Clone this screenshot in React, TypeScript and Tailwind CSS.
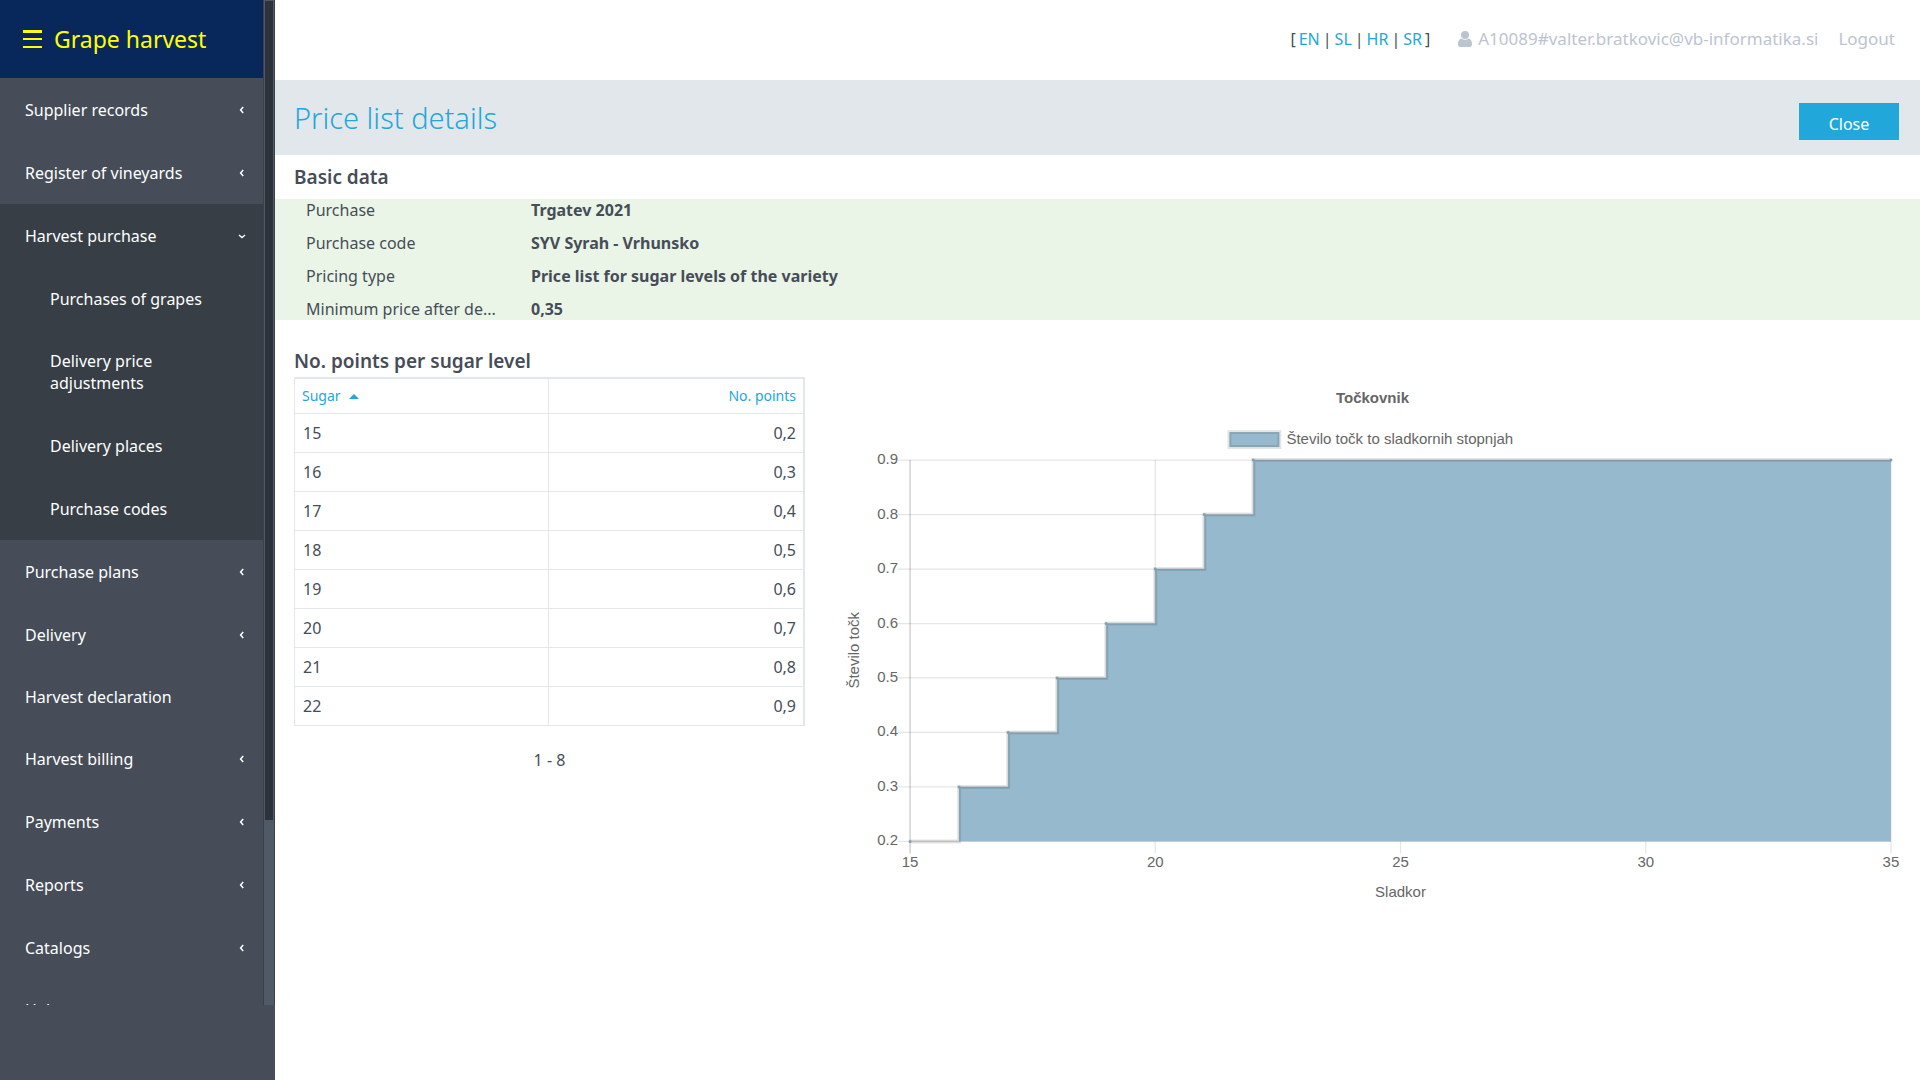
import React from "react";

type NavItem = { label: string; kind: "closed" | "open" | "leaf"; children?: string[] };

const NAV: NavItem[] = [
  { label: "Supplier records", kind: "closed" },
  { label: "Register of vineyards", kind: "closed" },
  {
    label: "Harvest purchase",
    kind: "open",
    children: ["Purchases of grapes", "Delivery price adjustments", "Delivery places", "Purchase codes"],
  },
  { label: "Purchase plans", kind: "closed" },
  { label: "Delivery", kind: "closed" },
  { label: "Harvest declaration", kind: "leaf" },
  { label: "Harvest billing", kind: "closed" },
  { label: "Payments", kind: "closed" },
  { label: "Reports", kind: "closed" },
  { label: "Catalogs", kind: "closed" },
  { label: "Help", kind: "leaf" },
];

const DETAILS: [string, string][] = [
  ["Purchase", "Trgatev 2021"],
  ["Purchase code", "SYV Syrah - Vrhunsko"],
  ["Pricing type", "Price list for sugar levels of the variety"],
  ["Minimum price after de...", "0,35"],
];

const POINTS: [number, string][] = [
  [15, "0,2"],
  [16, "0,3"],
  [17, "0,4"],
  [18, "0,5"],
  [19, "0,6"],
  [20, "0,7"],
  [21, "0,8"],
  [22, "0,9"],
];

function Chevron({ open }: { open: boolean }) {
  return (
    <svg viewBox="0 0 8 8" className="size-2 shrink-0" fill="none" stroke="currentColor" strokeWidth="1.5" aria-hidden="true">
      <path d={open ? "M1 3 L4 5.5 L7 3" : "M5.2 1 L2.6 4 L5.2 7"} />
    </svg>
  );
}

function Sidebar() {
  return (
    <aside className="w-[275px] shrink-0 bg-[#464d58] text-white">
      <div className="flex h-[calc(100vh-75px)] overflow-hidden">
        <div className="min-w-0 flex-1 border-r border-[#3a414a]">
          <div className="flex h-[78px] items-center gap-3 bg-[#08285c] pl-[23px] text-[#ffff00]">
            <svg viewBox="0 0 19 18" className="h-[18px] w-[19px]" fill="currentColor" aria-hidden="true">
              <path d="M0 0h19v3H0zM0 8h19v2H0zM0 16h19v2H0z" />
            </svg>
            <span className="text-[23px] leading-8">Grape harvest</span>
          </div>
          <nav>
            <ul>
              {NAV.map((item) => (
                <li key={item.label} className={item.kind === "open" ? "bg-[#373e45]" : ""}>
                  <a
                    href="#"
                    className={`flex items-center justify-between pl-[25px] pr-[17px] text-[16px] leading-[22px] ${
                      item.kind === "leaf" ? "h-[61px]" : "h-[63px]"
                    }`}
                  >
                    {item.label}
                    {item.kind !== "leaf" && <Chevron open={item.kind === "open"} />}
                  </a>
                  {item.children && (
                    <ul>
                      {item.children.map((c) => (
                        <li key={c}>
                          <a href="#" className="flex min-h-[63px] items-center py-5 pr-12 pl-[50px] text-[16px] leading-[22px]">
                            {c}
                          </a>
                        </li>
                      ))}
                    </ul>
                  )}
                </li>
              ))}
            </ul>
          </nav>
        </div>
        <div className="w-[11px] border-r border-[#3a414a] bg-[#505966] px-px pt-px">
          <div className="h-[819px] bg-[#2c333b]" />
        </div>
      </div>
    </aside>
  );
}

const PX = 66;
const STEP_X = 49;
const yAt = (v: number) => 465 - ((v - 0.2) / 0.7) * 381;
const xAt = (s: number) => PX + (s - 15) * STEP_X;

function StepChart() {
  const levels = [0.2, 0.3, 0.4, 0.5, 0.6, 0.7, 0.8, 0.9];
  let line = `M${xAt(15)} ${yAt(0.2)}`;
  levels.slice(1).forEach((v, i) => {
    line += ` H${xAt(16 + i)} V${yAt(v)}`;
  });
  line += ` H${xAt(35)}`;
  const corners = levels.map((v, i) => [xAt(15 + i), yAt(v)]).concat([[xAt(35), yAt(0.9)]]);
  return (
    <svg viewBox="0 0 1065 540" className="block w-full font-['Liberation_Sans',Arial,sans-serif] text-[15px]" role="img" aria-label="Točkovnik">
      <g stroke="#000" strokeOpacity="0.1" strokeWidth="1.25">
        {levels.map((v) => (
          <path key={v} d={`M54 ${yAt(v)}H1046`} />
        ))}
        {[20, 25, 30, 35].map((s) => (
          <path key={s} d={`M${xAt(s)} 84V477`} />
        ))}
        <path d="M66 84V477" strokeOpacity="0.22" />
      </g>
      <path d={`${line} V465 H66 Z`} fill="#97b9cd" />
      <path d={line} fill="none" stroke="#000" strokeOpacity="0.1" strokeWidth="4" />
      <path d={line} fill="none" stroke="#000" strokeOpacity="0.06" strokeWidth="2" />
      {corners.map(([x, y]) => (
        <circle key={`${x}-${y}`} cx={x} cy={y} r="1.5" fill="#7ba3b8" />
      ))}
      <rect x="385" y="56" width="50" height="15" fill="#97b9cd" />
      <rect x="385" y="56" width="50" height="15" fill="none" stroke="#000" strokeOpacity="0.1" strokeWidth="4" />
      <g fill="#666">
        <text x="528" y="27" textAnchor="middle" fontWeight="bold">Točkovnik</text>
        <text x="442" y="68">Število točk to sladkornih stopnjah</text>
        {levels.map((v) => (
          <text key={v} x="54" y={yAt(v) + 4} textAnchor="end">{v.toFixed(1)}</text>
        ))}
        {[15, 20, 25, 30, 35].map((s) => (
          <text key={s} x={xAt(s)} y="491" textAnchor="middle">{s}</text>
        ))}
        <text x="556" y="521" textAnchor="middle">Sladkor</text>
        <text transform="translate(15 274) rotate(-90)" textAnchor="middle">Število točk</text>
      </g>
    </svg>
  );
}

export default function App() {
  return (
    <div className="flex min-h-screen bg-white font-['Noto_Sans','Open_Sans',sans-serif] text-[#464d58]">
      <Sidebar />
      <main className="min-w-0 flex-1">
        <header className="flex h-20 items-center justify-end pr-[25px] pb-[2px] leading-[22px]">
          <div className="flex gap-[3px] text-[16px] whitespace-nowrap">
            <span>[</span>
            {["EN", "SL", "HR", "SR"].map((l, i) => (
              <React.Fragment key={l}>
                {i > 0 && <span>|</span>}
                <a href="#" className="text-[#22a7db]">{l}</a>
              </React.Fragment>
            ))}
            <span>]</span>
          </div>
          <a href="#" className="ml-[28px] flex items-center gap-[6px] text-[17px] text-[#bcc4d0]">
            <svg viewBox="0 0 14 16" className="h-4 w-[14px]" fill="currentColor" aria-hidden="true">
              <circle cx="7" cy="4" r="4" />
              <path d="M3.6 7.4C1.2 7.6 0 9.800 0 12.900 0 15 1 16 2.600 16h8.800C13 16 14 15 14 12.900c0-3.100-1.200-5.300-3.600-5.500a4.900 4.900 0 0 1-6.800 0z" />
            </svg>
            A10089#valter.bratkovic@vb-informatika.si
          </a>
          <a href="#" className="ml-5 text-[17px] text-[#bcc4d0]">Logout</a>
        </header>

        <div className="flex h-[75px] items-center justify-between bg-[#e2e7eb] pr-[21px] pl-[19px]">
          <h1 className="text-[29px] leading-9 font-light text-[#22a7db]">Price list details</h1>
          <button type="button" className="mt-2 h-[37px] w-[100px] bg-[#22a7db] pt-1 text-[16px] leading-[22px] text-white">Close</button>
        </div>

        <section>
          <h2 className="flex h-11 items-center pl-[19px] text-[19px] leading-6 font-semibold">Basic data</h2>
          <dl className="flex flex-col gap-[11px] bg-[#eaf5e7] pl-[31px] text-[16px] leading-[22px]">
            {DETAILS.map(([k, v]) => (
              <div key={k} className="flex">
                <dt className="w-[225px] shrink-0">{k}</dt>
                <dd className="font-bold">{v}</dd>
              </div>
            ))}
          </dl>
        </section>

        <div className="flex items-start gap-[39px] pt-7 pr-[10px] pl-[19px]">
          <section className="w-[511px] shrink-0">
            <h2 className="h-[29px] text-[19px] leading-[26px] font-semibold">No. points per sugar level</h2>
            <table className="w-full table-fixed border-separate border-spacing-0 border-t-2 border-r-2 border-l border-[#e2e7eb]">
              <thead>
                <tr className="h-[35px] text-[14px] leading-5 text-[#22a7db]">
                  <th scope="col" className="border-r border-b border-[#e2e7eb] px-[7px] text-left font-normal">
                    <button type="button" className="flex items-center gap-2">
                      Sugar
                      <svg viewBox="0 0 10 5" className="h-[5px] w-[10px]" fill="currentColor" aria-hidden="true">
                        <path d="M0 5L5 0l5 5z" />
                      </svg>
                    </button>
                  </th>
                  <th scope="col" className="border-b border-[#e2e7eb] px-[7px] text-right font-normal">No. points</th>
                </tr>
              </thead>
              <tbody>
                {POINTS.map(([s, p]) => (
                  <tr key={s} className="h-[39px] text-[16px] leading-[22px]">
                    <td className="border-r border-b border-[#e2e7eb] px-2">{s}</td>
                    <td className="border-b border-[#e2e7eb] px-[7px] text-right">{p}</td>
                  </tr>
                ))}
              </tbody>
            </table>
            <p className="pt-[23px] text-center text-[16px] leading-[22px]">1 - 8</p>
          </section>
          <div className="min-w-0 flex-1 pt-7">
            <StepChart />
          </div>
        </div>
      </main>
    </div>
  );
}
